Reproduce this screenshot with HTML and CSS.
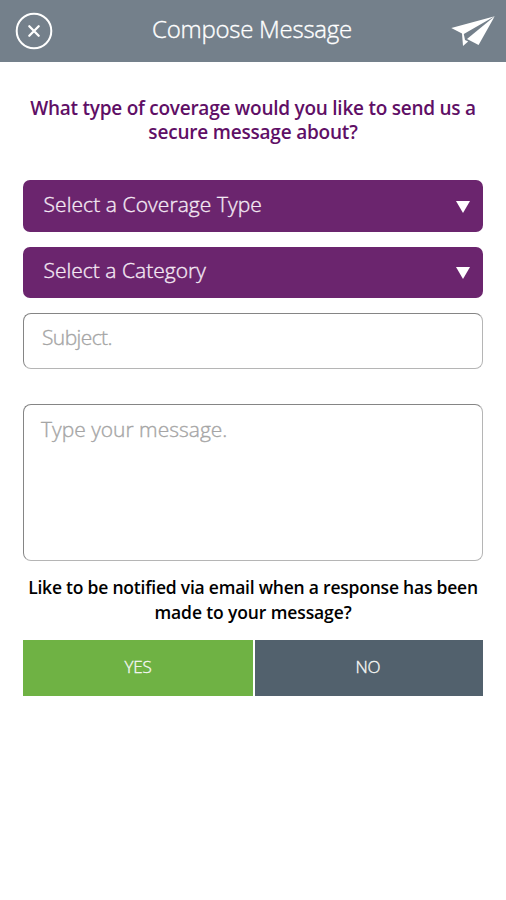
FILE: index.html
```html
<!DOCTYPE html>
<html lang="en">
<head>
<meta charset="utf-8">
<meta name="viewport" content="width=device-width">
<title>Compose Message</title>
<link rel="stylesheet" href="styles.css">
</head>
<body>
<header class="bar">
  <button class="icon-button" aria-label="Close">
    <svg width="38" height="38" viewBox="0 0 38 38" fill="none" stroke="#fff"><circle cx="19" cy="19" r="17.3" stroke-width="2"/><path d="M14.3 14.3l9.4 9.4M23.7 14.3l-9.4 9.4" stroke-width="2.3" stroke-linecap="round"/></svg>
  </button>
  <h1 class="title"><span class="title-text">Compose Message</span></h1>
  <button class="icon-button" aria-label="Send">
    <svg width="44" height="32" viewBox="0 0 44 32" fill="#fff"><path d="M0.3 13L43.7 1.2L12.8 19L14 25L17.2 26.5L12 31L11 18.5Z"/><path d="M43.7 1.2L27.6 30L16 24Z"/></svg>
  </button>
</header>
<main class="form">
  <h2 class="question"><span class="question-one">What type of coverage would you like to send us a</span><br><span class="question-two">secure message about?</span></h2>
  <div class="select"><span class="coverage">Select a Coverage Type</span><span class="arrow"></span></div>
  <div class="select category-select"><span class="category">Select a Category</span><span class="arrow"></span></div>
  <div class="field subject"><span class="subject-text">Subject.</span></div>
  <div class="field message"><span class="message-text">Type your message.</span></div>
  <p class="notice"><span class="notice-one">Like to be notified via email when a response has been</span><br><span class="notice-two">made to your message?</span></p>
  <div class="choices"><button class="choice yes">YES</button><button class="choice no">NO</button></div>
</main>
</body>
</html>
```
FILE: styles.css
```css
* { box-sizing: border-box; }
body { margin: 0; background: #fff; font-family: "Open Sans", "Noto Sans", sans-serif; }
button { border: 0; padding: 0; background: none; font: inherit; }
.bar { height: 62px; background: #74808b; display: flex; align-items: center; justify-content: space-between; padding: 0 11px 0 15px; }
.icon-button { display: flex; }
.title { margin: 0; padding-bottom: 4px; color: #fff; font-size: 24px; font-weight: 300; line-height: 30px; letter-spacing: -0.25px; white-space: nowrap; }
.title, .select, .field, .choice { -webkit-text-stroke: 0.35px currentColor; }
.form { padding: 34px 23px 0; }
.question { margin: 0 -10px 36px; height: 48px; color: #5f0f66; font-size: 19px; font-weight: 600; line-height: 24px; letter-spacing: -0.25px; text-align: center; white-space: nowrap; }
.question-two { letter-spacing: -0.2px; }
.select { height: 52px; margin-bottom: 15px; padding: 0 13.5px 4px 20.5px; border-radius: 7px; background: #6b256e; color: #f4e9f4; display: flex; align-items: center; justify-content: space-between; font-size: 21px; font-weight: 300; line-height: 28px; letter-spacing: 0.08px; white-space: nowrap; }
.category-select { height: 51px; padding-bottom: 5px; }
.category { letter-spacing: 0.02px; }
.arrow { width: 0; height: 0; margin-top: 6px; border: 7.5px solid transparent; border-top: 12px solid #fff; border-bottom: 0; }
.field { border: 1px solid #b5b5b5; border-top-color: #858585; border-left-color: #858585; border-radius: 8px; color: #a5a5a5; font-size: 21px; font-weight: 300; line-height: 28px; padding: 10px 17px; letter-spacing: 0; white-space: nowrap; }
.subject { height: 56px; margin-bottom: 35px; padding-top: 9px; padding-left: 18px; }
.subject-text { letter-spacing: -0.6px; }
.message { height: 157px; }
.notice { margin: 14px -10px 15px; color: #000; font-size: 17.5px; font-weight: 600; line-height: 25px; letter-spacing: -0.22px; text-align: center; white-space: nowrap; }
.notice-two { letter-spacing: -0.12px; }
.choices { display: grid; grid-template-columns: 230px 228px; gap: 2px; height: 56px; }
.choice { color: #f4f6f4; font-size: 17px; font-weight: 300; letter-spacing: -0.2px; padding: 0 2px 3px 0; }
.yes { background: #6fb244; padding-right: 0; }
.no { background: #52616d; }
```
